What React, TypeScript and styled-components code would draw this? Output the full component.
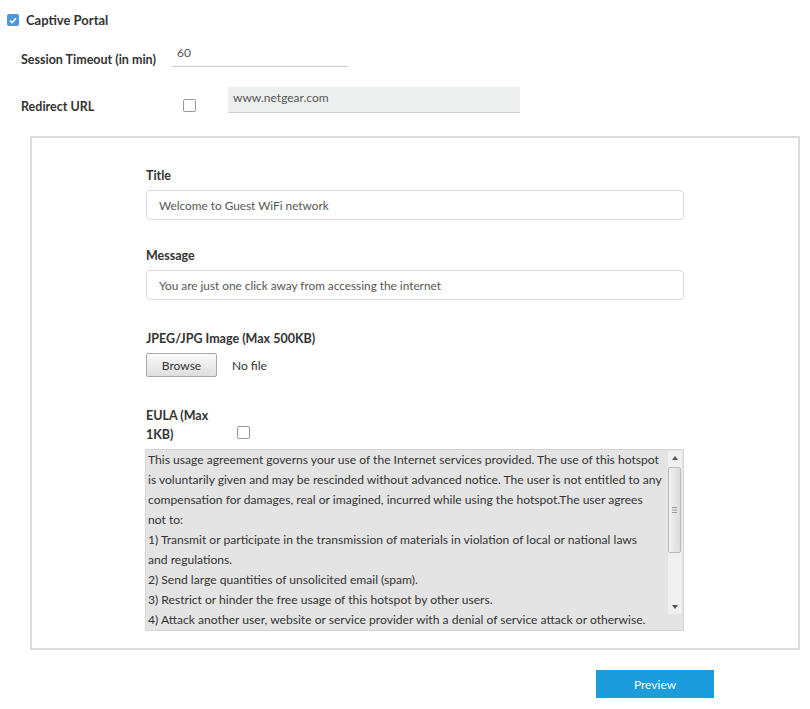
import React from "react";
import styled, { createGlobalStyle } from "styled-components";

const Global = createGlobalStyle`
  html, body { margin: 0; padding: 0; background: #fff; }
  body { font-family: Lato, "Open Sans", sans-serif; color: #333; }
  * { box-sizing: border-box; }
`;

const Page = styled.div`
  width: 810px;
  height: 709px;
  padding: 14px 0 0 7px;
`;

const HeaderRow = styled.div`
  display: flex;
  align-items: center;
  gap: 7px;
  height: 12px;
`;

const CheckedBox = styled.span`
  width: 12px;
  height: 12px;
  border-radius: 2px;
  background: #4f96dc;
  display: inline-flex;
  align-items: center;
  justify-content: center;
`;

const BoldText = styled.span`
  font-weight: 700;
  font-size: 13px;
  color: #333;
`;

const FieldRow = styled.div<{ $top: number; $height: number }>`
  display: flex;
  align-items: flex-start;
  margin-top: ${(p) => p.$top}px;
  height: ${(p) => p.$height}px;
  padding-left: 14px;
`;

const RowLabel = styled.span<{ $width: number; $top: number }>`
  width: ${(p) => p.$width}px;
  margin-top: ${(p) => p.$top}px;
  font-weight: 700;
  font-size: 12.5px;
  line-height: 18px;
  color: #333;
`;

const UnderlineInput = styled.div`
  width: 176px;
  height: 22px;
  border-bottom: 1px solid #cfcfcf;
  font-size: 12px;
  line-height: 16px;
  color: #555;
  padding: 0 0 0 5px;
`;

const EmptyBox = styled.span<{ $ml?: number; $mt?: number }>`
  display: inline-block;
  flex: none;
  width: 13px;
  height: 13px;
  border: 1px solid #999;
  border-radius: 2px;
  background: #fff;
  margin-left: ${(p) => p.$ml ?? 0}px;
  margin-top: ${(p) => p.$mt ?? 0}px;
`;

const UrlField = styled.div`
  width: 292px;
  height: 26px;
  margin-left: 32px;
  background: #eef0f0;
  border-bottom: 1px solid #cfcfcf;
  font-size: 12px;
  line-height: 16px;
  color: #555;
  padding: 3px 0 0 5px;
`;

const Panel = styled.div`
  margin: 23px 0 0 23px;
  width: 770px;
  height: 514px;
  border: 2px solid #dcdcdc;
  padding: 29px 0 0 114px;
`;

const Label = styled.div<{ $top?: number }>`
  font-weight: 700;
  font-size: 12.5px;
  line-height: 18px;
  color: #333;
  margin-top: ${(p) => p.$top ?? 0}px;
`;

const TextInput = styled.div`
  margin-top: 5px;
  width: 538px;
  height: 30px;
  border: 1px solid #dcdcdc;
  border-radius: 4px;
  font-size: 11.8px;
  color: #555;
  display: flex;
  align-items: center;
  padding-left: 12px;
`;

const FileRow = styled.div`
  margin-top: 5px;
  display: flex;
  align-items: center;
  gap: 15px;
`;

const BrowseButton = styled.button`
  width: 71px;
  height: 24px;
  border: 1px solid #a9a9a9;
  border-radius: 2px;
  background: linear-gradient(#fafafa, #dedede);
  font-family: Lato, "Open Sans", sans-serif;
  font-size: 12px;
  color: #333;
  padding: 0;
`;

const PlainText = styled.span`
  font-size: 12px;
  color: #333;
`;

const EulaRow = styled.div`
  margin-top: 29px;
  display: flex;
  align-items: flex-end;
`;

const EulaLabel = styled.div`
  width: 78px;
  font-weight: 700;
  font-size: 12.5px;
  line-height: 19px;
  color: #333;
`;

const EulaBox = styled.div`
  margin-top: 5px;
  width: 539px;
  margin-left: -1px;
  height: 182px;
  border: 1px solid #d6d6d6;
  background: #e4e4e4;
  display: flex;
`;

const EulaText = styled.div`
  flex: 1;
  overflow: hidden;
  font-size: 12.1px;
  line-height: 20px;
  color: #333;
  padding: 0 0 0 2px;
  white-space: pre;
`;

const ScrollBar = styled.div`
  width: 14px;
  display: flex;
  flex-direction: column;
  align-items: center;
  background: #f0f0f0;
  margin: 1px 1px 0 0;
`;

const Arrow = styled.div`
  height: 14px;
  width: 14px;
  display: flex;
  align-items: center;
  justify-content: center;
`;

const Track = styled.div`
  flex: 1;
  width: 100%;
  display: flex;
  flex-direction: column;
`;

const Thumb = styled.div`
  margin-top: 2px;
  height: 86px;
  width: 13px;
  border: 1px solid #b9b9b9;
  border-radius: 2px;
  background: linear-gradient(90deg, #f2f2f2, #dcdcdc);
  display: flex;
  align-items: center;
  justify-content: center;
`;

const Grip = styled.div`
  height: 16px;
  width: 14px;
  background: #e4e4e4;
`;

const Footer = styled.div`
  display: flex;
  justify-content: flex-end;
  padding-right: 96px;
  margin-top: 20px;
`;

const PreviewButton = styled.button`
  width: 118px;
  height: 28px;
  border: none;
  background: #1c9cdc;
  color: #fff;
  font-family: Lato, "Open Sans", sans-serif;
  font-size: 12px;
  padding: 0;
`;

const eula = `This usage agreement governs your use of the Internet services provided. The use of this hotspot
is voluntarily given and may be rescinded without advanced notice. The user is not entitled to any
compensation for damages, real or imagined, incurred while using the hotspot.The user agrees
not to:
1) Transmit or participate in the transmission of materials in violation of local or national laws
and regulations.
2) Send large quantities of unsolicited email (spam).
3) Restrict or hinder the free usage of this hotspot by other users.
4) Attack another user, website or service provider with a denial of service attack or otherwise.`;

export default function App() {
  return (
    <>
      <Global />
      <Page>
        <HeaderRow>
          <CheckedBox>
            <svg width="8" height="7" viewBox="0 0 8 7">
              <path d="M1 3.6 L3.1 5.6 L7 1.2" stroke="#fff" strokeWidth="1.6" fill="none" />
            </svg>
          </CheckedBox>
          <BoldText>Captive Portal</BoldText>
        </HeaderRow>
        <FieldRow $top={19} $height={22}>
          <RowLabel $width={151} $top={6}>Session Timeout (in min)</RowLabel>
          <UnderlineInput>60</UnderlineInput>
        </FieldRow>
        <FieldRow $top={20} $height={26}>
          <RowLabel $width={162} $top={11}>Redirect URL</RowLabel>
          <EmptyBox $mt={12} />
          <UrlField>www.netgear.com</UrlField>
        </FieldRow>
        <Panel>
          <Label>Title</Label>
          <TextInput>Welcome to Guest WiFi network</TextInput>
          <Label $top={27}>Message</Label>
          <TextInput>You are just one click away from accessing the internet</TextInput>
          <Label $top={30}>JPEG/JPG Image (Max 500KB)</Label>
          <FileRow>
            <BrowseButton>Browse</BrowseButton>
            <PlainText>No file</PlainText>
          </FileRow>
          <EulaRow>
            <EulaLabel>EULA (Max 1KB)</EulaLabel>
            <EmptyBox $ml={13} style={{ marginBottom: 5 }} />
          </EulaRow>
          <EulaBox>
            <EulaText>{eula}</EulaText>
            <ScrollBar>
              <Arrow>
                <svg width="6" height="4" viewBox="0 0 6 4">
                  <path d="M0 4 L3 0 L6 4 Z" fill="#555" />
                </svg>
              </Arrow>
              <Track>
                <Thumb>
                  <svg width="5" height="6" viewBox="0 0 5 6">
                    <path d="M0 0.5 H5 M0 3 H5 M0 5.5 H5" stroke="#999" strokeWidth="1" />
                  </svg>
                </Thumb>
              </Track>
              <Arrow>
                <svg width="6" height="4" viewBox="0 0 6 4">
                  <path d="M0 0 L6 0 L3 4 Z" fill="#555" />
                </svg>
              </Arrow>
              <Grip />
            </ScrollBar>
          </EulaBox>
        </Panel>
        <Footer>
          <PreviewButton>Preview</PreviewButton>
        </Footer>
      </Page>
    </>
  );
}
